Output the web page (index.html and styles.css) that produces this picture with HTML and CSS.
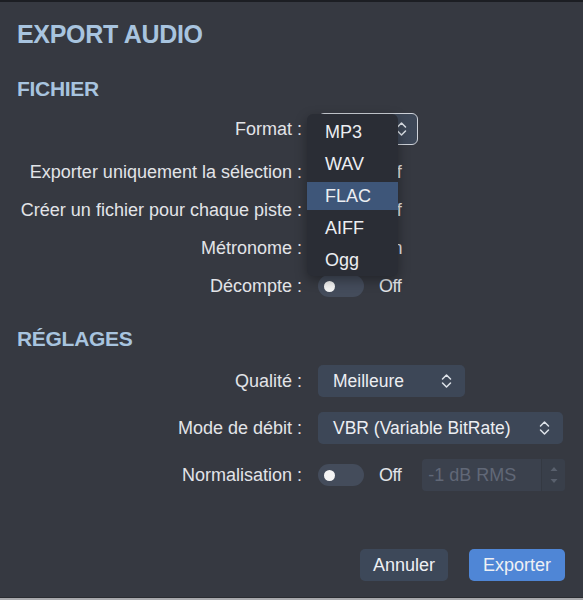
FILE: index.html
```html
<!DOCTYPE html>
<html lang="fr">
<head>
<meta charset="utf-8">
<title>Export audio</title>
<link rel="stylesheet" href="styles.css">
</head>
<body>
<div class="window">
  <div class="dialog">
    <h1 class="title">EXPORT AUDIO</h1>

    <h2 class="section section-file">FICHIER</h2>
    <div class="form">
      <div class="row row-format">
        <div class="label">Format :</div>
        <div class="control">
          <div class="select select-outlined select-format">
            <span class="select-value"></span>
            <svg class="chevron" width="11" height="16" viewBox="0 0 11 16"><path d="M1.5 6 L5.5 2 L9.5 6 M1.5 10 L5.5 14 L9.5 10"/></svg>
          </div>
          <ul class="menu">
            <li class="menu-item">MP3</li>
            <li class="menu-item">WAV</li>
            <li class="menu-item is-active">FLAC</li>
            <li class="menu-item">AIFF</li>
            <li class="menu-item">Ogg</li>
          </ul>
        </div>
      </div>
      <div class="row">
        <div class="label">Exporter uniquement la sélection :</div>
        <div class="control"><span class="toggle"><span class="knob"></span></span><span class="state">Off</span></div>
      </div>
      <div class="row">
        <div class="label">Créer un fichier pour chaque piste :</div>
        <div class="control"><span class="toggle"><span class="knob"></span></span><span class="state">Off</span></div>
      </div>
      <div class="row">
        <div class="label">Métronome :</div>
        <div class="control"><span class="toggle toggle-on"><span class="knob"></span></span><span class="state">On</span></div>
      </div>
      <div class="row">
        <div class="label">Décompte :</div>
        <div class="control"><span class="toggle"><span class="knob"></span></span><span class="state">Off</span></div>
      </div>
    </div>

    <h2 class="section section-settings">RÉGLAGES</h2>
    <div class="form">
      <div class="row row-select">
        <div class="label">Qualité :</div>
        <div class="control">
          <div class="select select-quality">
            <span class="select-value">Meilleure</span>
            <svg class="chevron" width="11" height="16" viewBox="0 0 11 16"><path d="M1.5 6 L5.5 2 L9.5 6 M1.5 10 L5.5 14 L9.5 10"/></svg>
          </div>
        </div>
      </div>
      <div class="row row-select">
        <div class="label">Mode de débit :</div>
        <div class="control">
          <div class="select select-mode">
            <span class="select-value">VBR (Variable BitRate)</span>
            <svg class="chevron" width="11" height="16" viewBox="0 0 11 16"><path d="M1.5 6 L5.5 2 L9.5 6 M1.5 10 L5.5 14 L9.5 10"/></svg>
          </div>
        </div>
      </div>
      <div class="row row-norm">
        <div class="label">Normalisation :</div>
        <div class="control">
          <span class="toggle"><span class="knob"></span></span><span class="state">Off</span>
          <div class="stepper">
            <span class="stepper-value">-1 dB RMS</span>
            <span class="stepper-arrows">
              <svg width="10" height="26" viewBox="0 0 10 26"><path d="M1.5 9 L5 5 L8.5 9 Z M1.5 17 L5 21 L8.5 17 Z"/></svg>
            </span>
          </div>
        </div>
      </div>
    </div>

    <div class="actions">
      <button class="btn btn-secondary">Annuler</button>
      <button class="btn btn-primary">Exporter</button>
    </div>
  </div>
  <div class="bottom-strip"></div>
</div>
</body>
</html>
```

FILE: styles.css
```css
* { box-sizing: border-box; }

html, body {
  margin: 0;
  padding: 0;
  background: #363941;
}

body {
  font-family: "Liberation Sans", Arial, sans-serif;
  color: #e4e6ea;
}

.window {
  height: 600px;
  display: flex;
  flex-direction: column;
  border-top: 2px solid #1c1e23;
  overflow: hidden;
}

.dialog {
  flex: 1;
  padding: 17px 18px 0 0;
  display: flex;
  flex-direction: column;
}

.title {
  margin: 0 0 0 17px;
  height: 30px;
  line-height: 30px;
  font-size: 25px;
  font-weight: bold;
  letter-spacing: -0.3px;
  color: #a8c4df;
}

.section {
  margin: 0 0 0 17px;
  height: 26px;
  line-height: 26px;
  font-size: 21px;
  font-weight: bold;
  letter-spacing: -0.3px;
  color: #a8c4df;
}

.section-file { margin-top: 27px; }
.section-settings { margin-top: 21px; }

.form {
  display: flex;
  flex-direction: column;
}

.section-file + .form { margin-top: 11px; }
.section-settings + .form { margin-top: 13px; }

.row {
  display: grid;
  grid-template-columns: 302px 1fr;
  column-gap: 16px;
  align-items: center;
  height: 38px;
}

.row-format {
  height: 32px;
  margin-bottom: 8px;
}

.row-select { height: 32px; margin-bottom: 15px; }
.row-norm { height: 32px; }

.label {
  text-align: right;
  font-size: 18px;
  color: #e2e4e8;
  white-space: nowrap;
}

.control {
  position: relative;
  display: flex;
  align-items: center;
  height: 100%;
}

.select {
  height: 32px;
  display: flex;
  align-items: center;
  justify-content: space-between;
  padding: 0 13px 0 15px;
  background: #3d4757;
  border-radius: 5px;
  font-size: 17.5px;
  color: #eceef2;
}

.select-outlined {
  border: 1px solid #cdd1d8;
  border-radius: 6px;
  padding-right: 10px;
}

.select-format { width: 100px; }
.select-quality { width: 147px; }
.select-mode { width: 245px; }

.chevron path {
  fill: none;
  stroke: #dfe3ea;
  stroke-width: 1.5;
  stroke-linecap: round;
  stroke-linejoin: round;
}

.menu {
  position: absolute;
  left: -11px;
  top: 1px;
  width: 91px;
  margin: 0;
  padding: 4px 0 2px;
  list-style: none;
  background: #2a2d35;
  border-radius: 6px;
  box-shadow: 0 4px 12px rgba(0, 0, 0, 0.35);
  z-index: 5;
}

.menu-item {
  height: 28px;
  line-height: 28px;
  padding-left: 18px;
  font-size: 18px;
  color: #eceef2;
}

.menu-item + .menu-item { margin-top: 4px; }

.menu-item.is-active {
  background: #3e5679;
}

.toggle {
  position: relative;
  width: 46px;
  height: 22px;
  border-radius: 11px;
  background: #444c5b;
  flex: none;
}

.knob {
  position: absolute;
  left: 6px;
  top: 5.5px;
  width: 11px;
  height: 11px;
  border-radius: 50%;
  background: #f4f4f4;
}

.toggle-on { background: #4f86d6; }
.toggle-on .knob { left: auto; right: 6px; }

.state {
  margin-left: 15px;
  font-size: 18px;
  color: #e2e4e8;
  letter-spacing: -0.5px;
}

.stepper {
  margin-left: 21px;
  width: 143px;
  height: 32px;
  display: flex;
  background: #3b414d;
  border-radius: 4px;
  overflow: hidden;
}

.stepper-value {
  flex: 1;
  display: flex;
  align-items: center;
  padding-left: 6px;
  font-size: 18px;
  color: #616877;
}

.stepper-arrows {
  width: 24px;
  display: flex;
  align-items: center;
  justify-content: center;
  background: #393f4a;
  border-left: 1px solid #343942;
}

.stepper-arrows path { fill: #59606d; }

.actions {
  margin-top: 58px;
  display: flex;
  justify-content: flex-end;
  gap: 21px;
}

.btn {
  height: 32px;
  padding: 0 13px;
  border: none;
  border-radius: 5px;
  font-family: "Liberation Sans", Arial, sans-serif;
  font-size: 18px;
  color: #eef0f4;
}

.btn-secondary { background: #3d4859; }
.btn-primary { background: #4f86d6; padding: 0 14px; }

.bottom-strip {
  height: 3px;
  background: #a9aaad;
  border-top: 1px solid #2a2c31;
}
```
